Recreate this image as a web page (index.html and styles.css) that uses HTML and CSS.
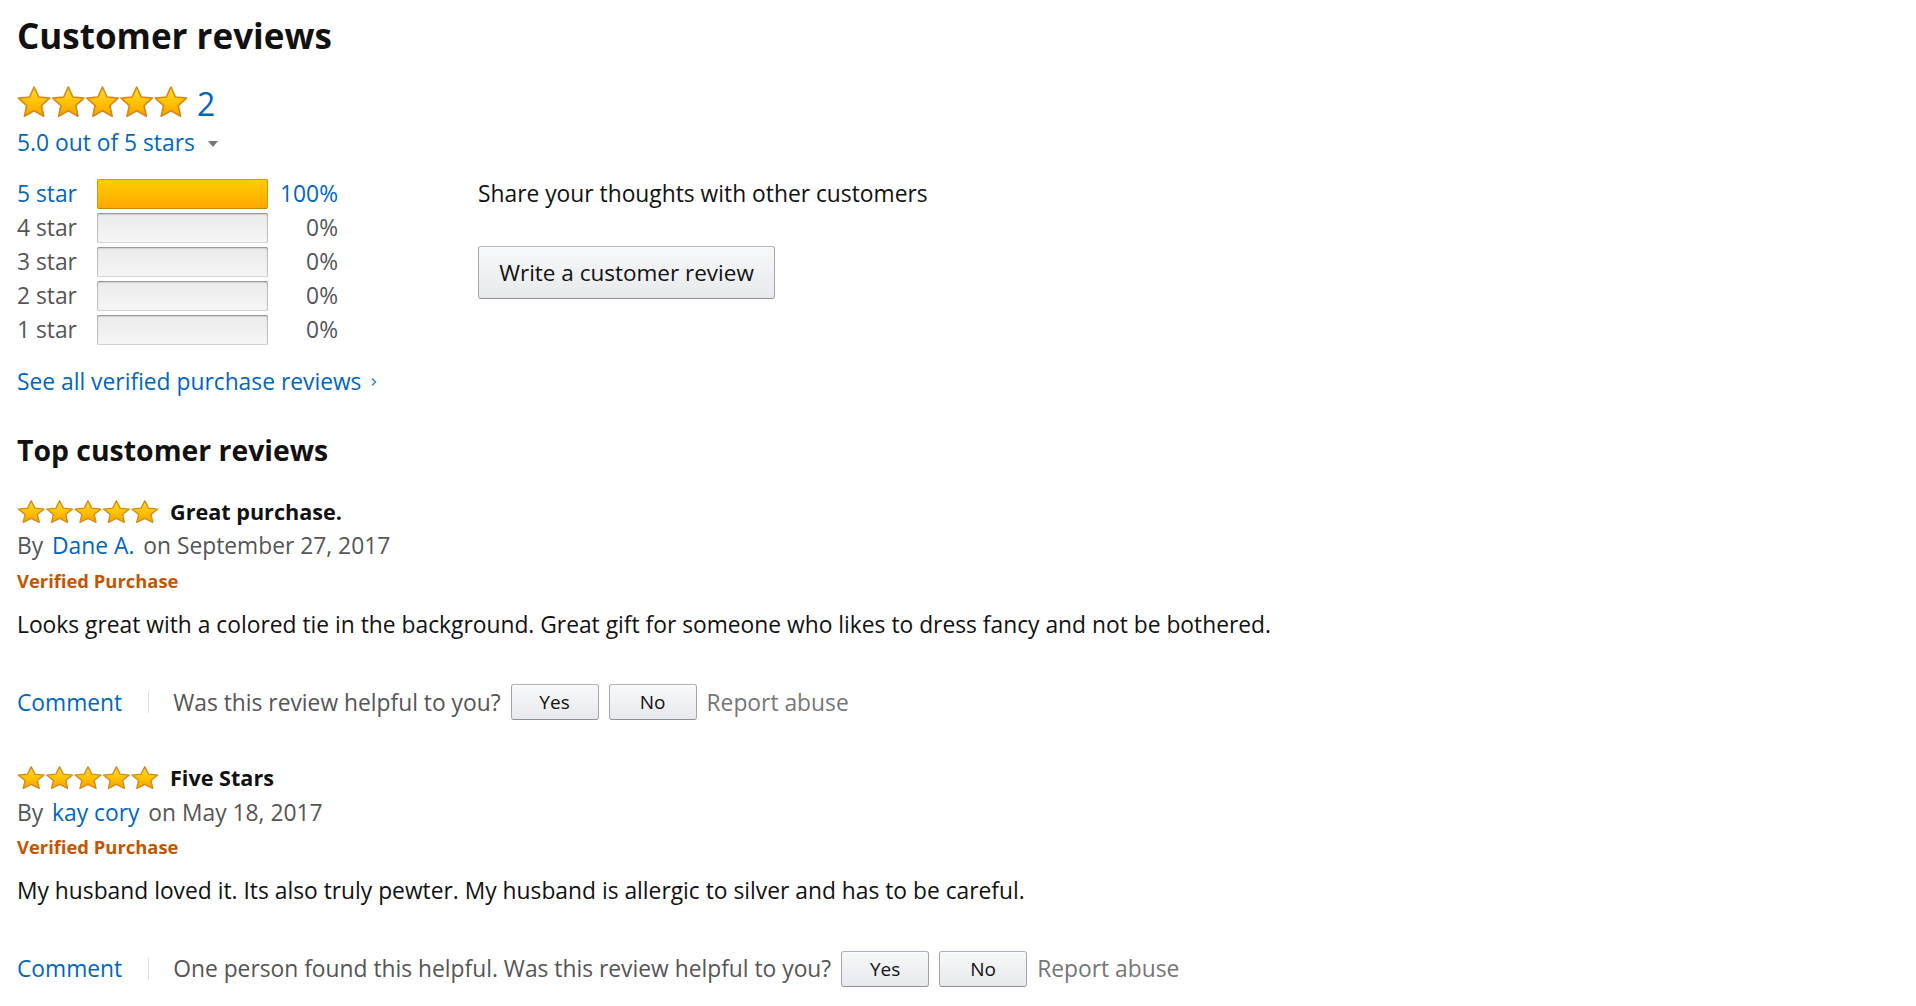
FILE: index.html
```html
<!DOCTYPE html>
<html lang="en">
<head>
<meta charset="utf-8">
<title>Customer reviews</title>
<link rel="stylesheet" href="styles.css">
</head>
<body>
<svg class="svg-defs" width="0" height="0" aria-hidden="true">
  <defs>
    <linearGradient id="starFill" x1="0" y1="0" x2="0" y2="1">
      <stop offset="0" stop-color="#ffdc3c"/>
      <stop offset="0.55" stop-color="#ffc000"/>
      <stop offset="1" stop-color="#f7a000"/>
    </linearGradient>
    <symbol id="star" viewBox="0 0 100 92">
      <polygon points="50,3 63.28,32.72 95.65,36.17 71.49,57.98 78.21,89.83 50,73.6 21.79,89.83 28.51,57.98 4.35,36.17 36.72,32.72" fill="url(#starFill)" stroke="#d48c12" stroke-width="5" stroke-linejoin="round"/>
    </symbol>
  </defs>
</svg>

<div class="page">
  <h2 class="title">Customer reviews</h2>

  <div class="avg-row">
    <svg class="stars stars-lg" viewBox="0 0 500 92" preserveAspectRatio="none">
      <use href="#star" x="0" y="0" width="100" height="92"/>
      <use href="#star" x="100" y="0" width="100" height="92"/>
      <use href="#star" x="200" y="0" width="100" height="92"/>
      <use href="#star" x="300" y="0" width="100" height="92"/>
      <use href="#star" x="400" y="0" width="100" height="92"/>
    </svg>
    <a class="count link">2</a>
  </div>
  <div class="avg-text"><a class="link">5.0 out of 5 stars</a><span class="caret"></span></div>

  <div class="summary">
    <div class="hist-col">
      <div class="hist">
        <a class="hist-label link">5 star</a>
        <div class="meter"><div class="meter-fill" style="width:100%"></div></div>
        <a class="hist-pct link">100%</a>

        <span class="hist-label">4 star</span>
        <div class="meter"><div class="meter-fill" style="width:0%"></div></div>
        <span class="hist-pct">0%</span>

        <span class="hist-label">3 star</span>
        <div class="meter"><div class="meter-fill" style="width:0%"></div></div>
        <span class="hist-pct">0%</span>

        <span class="hist-label">2 star</span>
        <div class="meter"><div class="meter-fill" style="width:0%"></div></div>
        <span class="hist-pct">0%</span>

        <span class="hist-label">1 star</span>
        <div class="meter"><div class="meter-fill" style="width:0%"></div></div>
        <span class="hist-pct">0%</span>
      </div>
      <a class="see-all link">See all verified purchase reviews<svg class="chev" viewBox="0 0 6 10"><path d="M1 1.5 L4.5 5 L1 8.5" fill="none" stroke="#3f88c8" stroke-width="1.6"/></svg></a>
    </div>
    <div class="share-col">
      <div class="share">Share your thoughts with other customers</div>
      <button class="btn btn-lg">Write a customer review</button>
    </div>
  </div>

  <h3 class="subtitle">Top customer reviews</h3>

  <div class="review">
    <div class="rv-head">
      <svg class="stars stars-sm" viewBox="0 0 500 92" preserveAspectRatio="none">
        <use href="#star" x="0" y="0" width="100" height="92"/>
        <use href="#star" x="100" y="0" width="100" height="92"/>
        <use href="#star" x="200" y="0" width="100" height="92"/>
        <use href="#star" x="300" y="0" width="100" height="92"/>
        <use href="#star" x="400" y="0" width="100" height="92"/>
      </svg>
      <span class="rv-title">Great purchase.</span>
    </div>
    <div class="rv-by">By <a class="author link">Dane A.</a> on September 27, 2017</div>
    <div class="verified">Verified Purchase</div>
    <div class="rv-body">Looks great with a colored tie in the background. Great gift for someone who likes to dress fancy and not be bothered.</div>
    <div class="rv-actions">
      <a class="link">Comment</a>
      <span class="sep"></span>
      <span class="helpful">Was this review helpful to you?</span>
      <button class="btn btn-sm">Yes</button>
      <button class="btn btn-sm">No</button>
      <span class="report">Report abuse</span>
    </div>
  </div>

  <div class="review">
    <div class="rv-head">
      <svg class="stars stars-sm" viewBox="0 0 500 92" preserveAspectRatio="none">
        <use href="#star" x="0" y="0" width="100" height="92"/>
        <use href="#star" x="100" y="0" width="100" height="92"/>
        <use href="#star" x="200" y="0" width="100" height="92"/>
        <use href="#star" x="300" y="0" width="100" height="92"/>
        <use href="#star" x="400" y="0" width="100" height="92"/>
      </svg>
      <span class="rv-title">Five Stars</span>
    </div>
    <div class="rv-by">By <a class="author link">kay cory</a> on May 18, 2017</div>
    <div class="verified">Verified Purchase</div>
    <div class="rv-body">My husband loved it. Its also truly pewter. My husband is allergic to silver and has to be careful.</div>
    <div class="rv-actions">
      <a class="link">Comment</a>
      <span class="sep"></span>
      <span class="helpful">One person found this helpful. Was this review helpful to you?</span>
      <button class="btn btn-sm">Yes</button>
      <button class="btn btn-sm">No</button>
      <span class="report">Report abuse</span>
    </div>
  </div>
</div>
</body>
</html>
```

FILE: styles.css
```css
html, body {
  margin: 0;
  padding: 0;
  background: #ffffff;
}

body {
  font-family: "Open Sans", "Liberation Sans", Arial, sans-serif;
  font-size: 22.8px;
  color: #111111;
}

.svg-defs {
  display: block;
  width: 0;
  height: 0;
  overflow: hidden;
}

.page {
  padding: 14px 0 0 17px;
}

.link {
  color: #0066c0;
  text-decoration: none;
  cursor: pointer;
}

.title {
  margin: 0;
  font-size: 35px;
  line-height: 44px;
  font-weight: 700;
}

.avg-row {
  display: flex;
  align-items: center;
  height: 36px;
  margin-top: 25px;
}

.stars {
  display: block;
  flex: none;
}

.stars-lg {
  width: 171px;
  height: 31px;
}

.count {
  font-size: 32px;
  line-height: 36px;
  margin-left: 9px;
  margin-top: 6px;
}

.avg-text {
  margin-top: 10px;
  line-height: 28px;
  display: flex;
  align-items: center;
}

.caret {
  display: inline-block;
  width: 0;
  height: 0;
  margin-left: 13px;
  margin-top: 2px;
  border-left: 5.5px solid transparent;
  border-right: 5.5px solid transparent;
  border-top: 6px solid #767676;
}

.summary {
  display: flex;
  margin-top: 19.5px;
}

.hist-col {
  width: 380px;
  flex: none;
}

.hist {
  display: grid;
  grid-template-columns: 80px 171px 70px;
  grid-auto-rows: 34px;
  align-items: center;
}

.hist-label {
  color: #555555;
  line-height: 34px;
  white-space: nowrap;
}

.hist-label.link {
  color: #0066c0;
}

.hist-pct {
  text-align: right;
  color: #555555;
  line-height: 34px;
}

.hist-pct.link {
  color: #0066c0;
}

.meter {
  height: 30px;
  box-sizing: border-box;
  border-radius: 2px;
  background: linear-gradient(to bottom, #eaeaea, #f6f6f6);
  box-shadow: inset 0 1px 2px rgba(0, 0, 0, 0.35), inset 0 0 0 1px rgba(0, 0, 0, 0.12);
  overflow: hidden;
}

.meter-fill {
  height: 100%;
  box-sizing: border-box;
  border-radius: 2px;
  background: linear-gradient(to bottom, #ffce00, #ffa700);
  border: 1px solid #d9990a;
  border-bottom-color: #c88a00;
}

.meter-fill[style="width:0%"] {
  border: none;
}

.see-all {
  display: inline-flex;
  align-items: center;
  margin-top: 21.5px;
  line-height: 28px;
  white-space: nowrap;
}

.chev {
  width: 6px;
  height: 10px;
  margin-left: 10px;
}

.share-col {
  margin-left: 81px;
}

.share {
  line-height: 34px;
}

.btn {
  font-family: inherit;
  color: #111111;
  border: 1px solid #adb1b8;
  border-color: #adb1b8 #a2a6ac #8d9096;
  border-radius: 3px;
  background: linear-gradient(to bottom, #f7f8fa, #e7e9ec);
  box-shadow: inset 0 1px 0 rgba(255, 255, 255, 0.6);
  padding: 0;
  cursor: pointer;
}

.btn-lg {
  display: block;
  margin-top: 35px;
  width: 297px;
  height: 53px;
  font-size: 22.5px;
}

.subtitle {
  margin: 35px 0 0 0;
  font-size: 28.4px;
  line-height: 36px;
  font-weight: 700;
}

.review {
  margin-top: 42.5px;
}

.subtitle + .review {
  margin-top: 28.2px;
}

.rv-head {
  display: flex;
  align-items: center;
  height: 30px;
}

.stars-sm {
  width: 142px;
  height: 23px;
}

.rv-title {
  font-weight: 700;
  font-size: 21.6px;
  margin-left: 11px;
}

.rv-by {
  margin-top: 3.2px;
  line-height: 34px;
  color: #555555;
}

.author {
  padding: 0 3px 0 3px;
}

.verified {
  margin-top: 2.5px;
  font-size: 18.4px;
  font-weight: 700;
  line-height: 30px;
  color: #c45500;
}

.rv-body {
  margin-top: 11.8px;
  line-height: 34px;
}

.rv-actions {
  display: flex;
  align-items: center;
  height: 36px;
  margin-top: 42.5px;
  white-space: nowrap;
}

.sep {
  width: 0;
  height: 22px;
  border-left: 1px solid #dddddd;
  margin: 0 24px 0 26px;
}

.helpful {
  color: #555555;
}

.btn-sm {
  width: 88px;
  height: 36px;
  font-size: 19px;
  margin-left: 10px;
}

.report {
  margin-left: 10px;
  color: #767676;
}
```
